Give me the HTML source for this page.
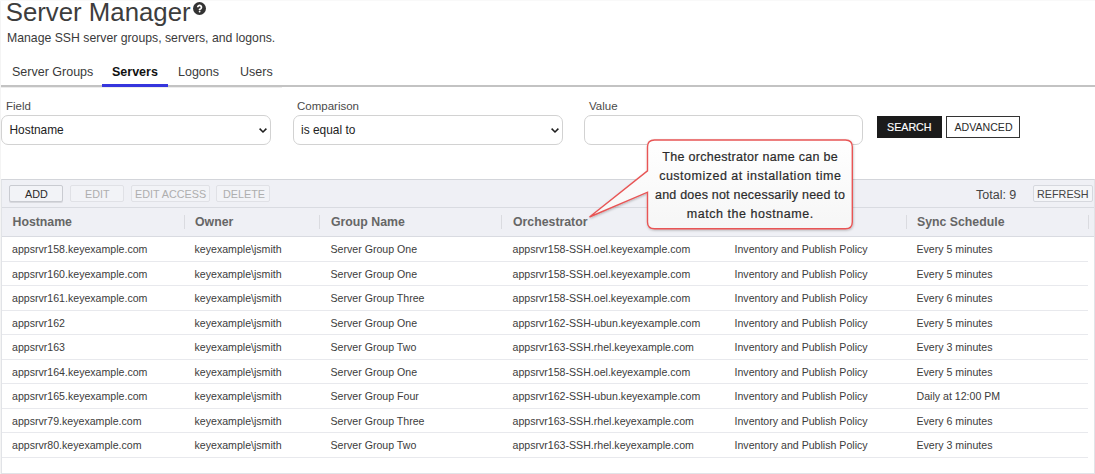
<!DOCTYPE html>
<html><head><meta charset="utf-8">
<style>
*{box-sizing:border-box;margin:0;padding:0}
html,body{width:1095px;height:474px;overflow:hidden;background:#fff;font-family:"Liberation Sans",sans-serif;color:#333;position:relative}
body>div,body>svg{position:absolute}
.t{white-space:nowrap;line-height:1}
#title{left:5.7px;top:-0.5px;font-size:25.8px;color:#3d3d3d}
#help{left:193.3px;top:1.5px;width:13px;height:13px}
#sub{left:7px;top:32.1px;font-size:12.25px;color:#3a3a3a}
.tab{top:65.9px;font-size:12.5px;color:#3a3a3a}
#tabline{left:1px;top:85px;width:1094px;height:2px;background:#c3c3c3}
#tabsel{left:102px;top:84px;width:66px;height:3px;background:#3535dd}
.lbl{top:101.1px;font-size:11.5px;color:#4a4a4a}
.sel{top:115px;height:30px;border:1px solid #d2d2d2;border-radius:7px;background:#fff}
.selt{top:125.0px;font-size:11.9px;color:#222}
.chev{top:127px;width:10px;height:7px}
#search{left:876.5px;top:116px;width:65.5px;height:22px;background:#1b1b1b}
#searcht{left:887px;top:122.0px;font-size:10.7px;color:#fff;-webkit-text-stroke:0.15px #fff}
#adv{left:946px;top:116px;width:74px;height:22px;border:1.5px solid #333;background:#fff}
#advt{left:954.5px;top:122.1px;font-size:10.6px;color:#2a2a2a}
#grid{left:1px;top:179px;width:1094px;height:295px;border:1px solid #e1e3e7;border-top-color:#d3d5da;background:#fff}
#edgeL{left:0;top:0;width:1px;height:474px;background:#f4f4f4}
#edgeT{left:0;top:0;width:1095px;height:1px;background:#f9f9f9}
#toolbar{left:2px;top:180px;width:1092px;height:27px;background:#eff0f5}
#tb2{left:2px;top:207px;width:1092px;height:1px;background:#d9dbe1}
#head{left:2px;top:208px;width:1092px;height:28px;background:#eff0f5}
#hb{left:2px;top:236px;width:1092px;height:1px;background:#d9dbe1}
.tbtn{top:184.6px;height:17px;border:1px solid #e0e1e6;border-radius:2px;background:#f2f3f7}
.tbt{top:188.5px;font-size:10.8px;color:#aeaeae}
.hc{top:216.4px;font-size:12.3px;font-weight:bold;color:#666}
.hs{top:215px;width:1px;height:14px;background:#dadbe0}
.row{position:absolute;left:2px;width:1087px;height:24.5px}
.rl{position:absolute;left:2px;width:1086px;height:1px;background:#e8e9ed}
.c{font-size:10.6px;color:#3c3c3c;white-space:nowrap;position:absolute;top:7.7px;line-height:1}
#callout{left:580px;top:132px;width:280px;height:105px}
.ct{left:600px;width:300px;text-align:center;font-size:12.5px;color:#2b2b2b;-webkit-text-stroke:0.2px #2b2b2b}
</style></head><body>
<div id="title" class="t">Server Manager</div>
<svg id="help" viewBox="0 0 13 13"><circle cx="6.5" cy="6.5" r="6.5" fill="#333"/><path d="M4.75 5.3 A1.85 1.85 0 1 1 7.9 6.6 L6.6 7.5 L6.6 8.1" stroke="#fff" stroke-width="1.75" fill="none"/><circle cx="6.6" cy="9.5" r="0.9" fill="#fff"/></svg>
<div id="sub" class="t">Manage SSH server groups, servers, and logons.</div>
<div class="tab t" style="left:12px">Server Groups</div>
<div class="tab t" style="left:112px;font-weight:bold;color:#111">Servers</div>
<div class="tab t" style="left:178px">Logons</div>
<div class="tab t" style="left:240px">Users</div>
<div id="tabline"></div>
<div style="left:1px;top:87px;width:281px;height:1px;background:#ececec"></div>
<div id="tabsel"></div>

<div class="lbl t" style="left:6px">Field</div>
<div class="sel" style="left:1px;width:270px"></div>
<div class="selt t" style="left:9.5px">Hostname</div>
<svg class="chev" style="left:258px" viewBox="0 0 10 7"><path d="M1.6 1.6 L5 5 L8.4 1.6" stroke="#1e1e1e" stroke-width="1.5" fill="none"/></svg>
<div class="lbl t" style="left:297px">Comparison</div>
<div class="sel" style="left:293px;width:270px"></div>
<div class="selt t" style="left:301.1px">is equal to</div>
<svg class="chev" style="left:549.6px" viewBox="0 0 10 7"><path d="M1.6 1.6 L5 5 L8.4 1.6" stroke="#1e1e1e" stroke-width="1.5" fill="none"/></svg>
<div class="lbl t" style="left:589px">Value</div>
<div class="sel" style="left:584px;width:279px"></div>
<div id="search"></div>
<div id="searcht" class="t">SEARCH</div>
<div id="adv"></div>
<div id="advt" class="t">ADVANCED</div>

<div id="grid"></div>
<div id="edgeL"></div><div id="edgeT"></div>
<div id="toolbar"></div>
<div id="tb2"></div>
<div class="tbtn" style="left:9px;width:54px;border-color:#c9cbd1;box-shadow:0 1px 0 #d8d9de"></div>
<div class="tbt t" style="left:25px;color:#2a2a2a">ADD</div>
<div class="tbtn" style="left:70px;width:53.5px"></div>
<div class="tbt t" style="left:85px">EDIT</div>
<div class="tbtn" style="left:130.5px;width:79px"></div>
<div class="tbt t" style="left:135px">EDIT ACCESS</div>
<div class="tbtn" style="left:216px;width:54px"></div>
<div class="tbt t" style="left:223px">DELETE</div>
<div class="t" style="left:976px;top:188.7px;font-size:12.5px;color:#444">Total: 9</div>
<div class="tbtn" style="left:1032.5px;width:60px;border-color:#d6d8de;background:#f4f5f8"></div>
<div class="tbt t" style="left:1037px;color:#444">REFRESH</div>

<div id="head"></div>
<div id="hb"></div>
<div class="hc t" style="left:12.5px">Hostname</div>
<div class="hs" style="left:184px"></div>
<div class="hc t" style="left:195px">Owner</div>
<div class="hs" style="left:319px"></div>
<div class="hc t" style="left:331px">Group Name</div>
<div class="hs" style="left:501px"></div>
<div class="hc t" style="left:513px">Orchestrator</div>
<div class="hs" style="left:723.5px"></div>
<div class="hc t" style="left:735px">Policy</div>
<div class="hs" style="left:906px"></div>
<div class="hc t" style="left:917px">Sync Schedule</div>
<div class="hs" style="left:1088px"></div>
<div class="row" style="top:236.70px"><div class="c" style="left:10px">appsrvr158.keyexample.com</div><div class="c" style="left:192.5px">keyexample\jsmith</div><div class="c" style="left:328.5px">Server Group One</div><div class="c" style="left:510.5px">appsrvr158-SSH.oel.keyexample.com</div><div class="c" style="left:732.5px">Inventory and Publish Policy</div><div class="c" style="left:914.5px">Every 5 minutes</div></div>
<div class="rl" style="top:260.90px"></div>
<div class="row" style="top:261.20px"><div class="c" style="left:10px">appsrvr160.keyexample.com</div><div class="c" style="left:192.5px">keyexample\jsmith</div><div class="c" style="left:328.5px">Server Group One</div><div class="c" style="left:510.5px">appsrvr158-SSH.oel.keyexample.com</div><div class="c" style="left:732.5px">Inventory and Publish Policy</div><div class="c" style="left:914.5px">Every 5 minutes</div></div>
<div class="rl" style="top:285.40px"></div>
<div class="row" style="top:285.70px"><div class="c" style="left:10px">appsrvr161.keyexample.com</div><div class="c" style="left:192.5px">keyexample\jsmith</div><div class="c" style="left:328.5px">Server Group Three</div><div class="c" style="left:510.5px">appsrvr158-SSH.oel.keyexample.com</div><div class="c" style="left:732.5px">Inventory and Publish Policy</div><div class="c" style="left:914.5px">Every 6 minutes</div></div>
<div class="rl" style="top:309.90px"></div>
<div class="row" style="top:310.20px"><div class="c" style="left:10px">appsrvr162</div><div class="c" style="left:192.5px">keyexample\jsmith</div><div class="c" style="left:328.5px">Server Group One</div><div class="c" style="left:510.5px">appsrvr162-SSH-ubun.keyexample.com</div><div class="c" style="left:732.5px">Inventory and Publish Policy</div><div class="c" style="left:914.5px">Every 5 minutes</div></div>
<div class="rl" style="top:334.40px"></div>
<div class="row" style="top:334.70px"><div class="c" style="left:10px">appsrvr163</div><div class="c" style="left:192.5px">keyexample\jsmith</div><div class="c" style="left:328.5px">Server Group Two</div><div class="c" style="left:510.5px">appsrvr163-SSH.rhel.keyexample.com</div><div class="c" style="left:732.5px">Inventory and Publish Policy</div><div class="c" style="left:914.5px">Every 3 minutes</div></div>
<div class="rl" style="top:358.90px"></div>
<div class="row" style="top:359.20px"><div class="c" style="left:10px">appsrvr164.keyexample.com</div><div class="c" style="left:192.5px">keyexample\jsmith</div><div class="c" style="left:328.5px">Server Group One</div><div class="c" style="left:510.5px">appsrvr158-SSH.oel.keyexample.com</div><div class="c" style="left:732.5px">Inventory and Publish Policy</div><div class="c" style="left:914.5px">Every 5 minutes</div></div>
<div class="rl" style="top:383.40px"></div>
<div class="row" style="top:383.70px"><div class="c" style="left:10px">appsrvr165.keyexample.com</div><div class="c" style="left:192.5px">keyexample\jsmith</div><div class="c" style="left:328.5px">Server Group Four</div><div class="c" style="left:510.5px">appsrvr162-SSH-ubun.keyexample.com</div><div class="c" style="left:732.5px">Inventory and Publish Policy</div><div class="c" style="left:914.5px">Daily at 12:00 PM</div></div>
<div class="rl" style="top:407.90px"></div>
<div class="row" style="top:408.20px"><div class="c" style="left:10px">appsrvr79.keyexample.com</div><div class="c" style="left:192.5px">keyexample\jsmith</div><div class="c" style="left:328.5px">Server Group Three</div><div class="c" style="left:510.5px">appsrvr163-SSH.rhel.keyexample.com</div><div class="c" style="left:732.5px">Inventory and Publish Policy</div><div class="c" style="left:914.5px">Every 6 minutes</div></div>
<div class="rl" style="top:432.40px"></div>
<div class="row" style="top:432.70px"><div class="c" style="left:10px">appsrvr80.keyexample.com</div><div class="c" style="left:192.5px">keyexample\jsmith</div><div class="c" style="left:328.5px">Server Group Two</div><div class="c" style="left:510.5px">appsrvr163-SSH.rhel.keyexample.com</div><div class="c" style="left:732.5px">Inventory and Publish Policy</div><div class="c" style="left:914.5px">Every 3 minutes</div></div>
<div class="rl" style="top:456.90px"></div>

<svg id="callout" viewBox="580 132 280 105">
 <defs>
  <linearGradient id="cg" x1="0" y1="0" x2="0" y2="1"><stop offset="0" stop-color="#ffffff"/><stop offset="1" stop-color="#f6f6f6"/></linearGradient>
  <filter id="sh" x="-10%" y="-10%" width="130%" height="130%"><feDropShadow dx="0.5" dy="1" stdDeviation="1" flood-color="#000" flood-opacity="0.25"/></filter>
 </defs>
 <path d="M654.5 140 L845.5 140 Q852.3 140 852.3 146.8 L852.3 222 Q852.3 228.7 845.5 228.7 L654.5 228.7 Q647.5 228.7 647.5 222 L647.5 192.2 L589.5 217 L647.5 170.8 L647.5 146.8 Q647.5 140 654.5 140 Z" fill="url(#cg)" stroke="#e85555" stroke-width="1.4" stroke-linejoin="miter" filter="url(#sh)"/>
</svg>
<div class="ct t" style="top:151.1px;letter-spacing:0.29px;padding-left:0.29px">The orchestrator name can be</div>
<div class="ct t" style="top:169.8px;letter-spacing:0.5px;padding-left:0.5px">customized at installation time</div>
<div class="ct t" style="top:189.1px;letter-spacing:0.21px;padding-left:0.21px">and does not necessarily need to</div>
<div class="ct t" style="top:208px;letter-spacing:0.55px;padding-left:0.55px">match the hostname.</div>
</body></html>
